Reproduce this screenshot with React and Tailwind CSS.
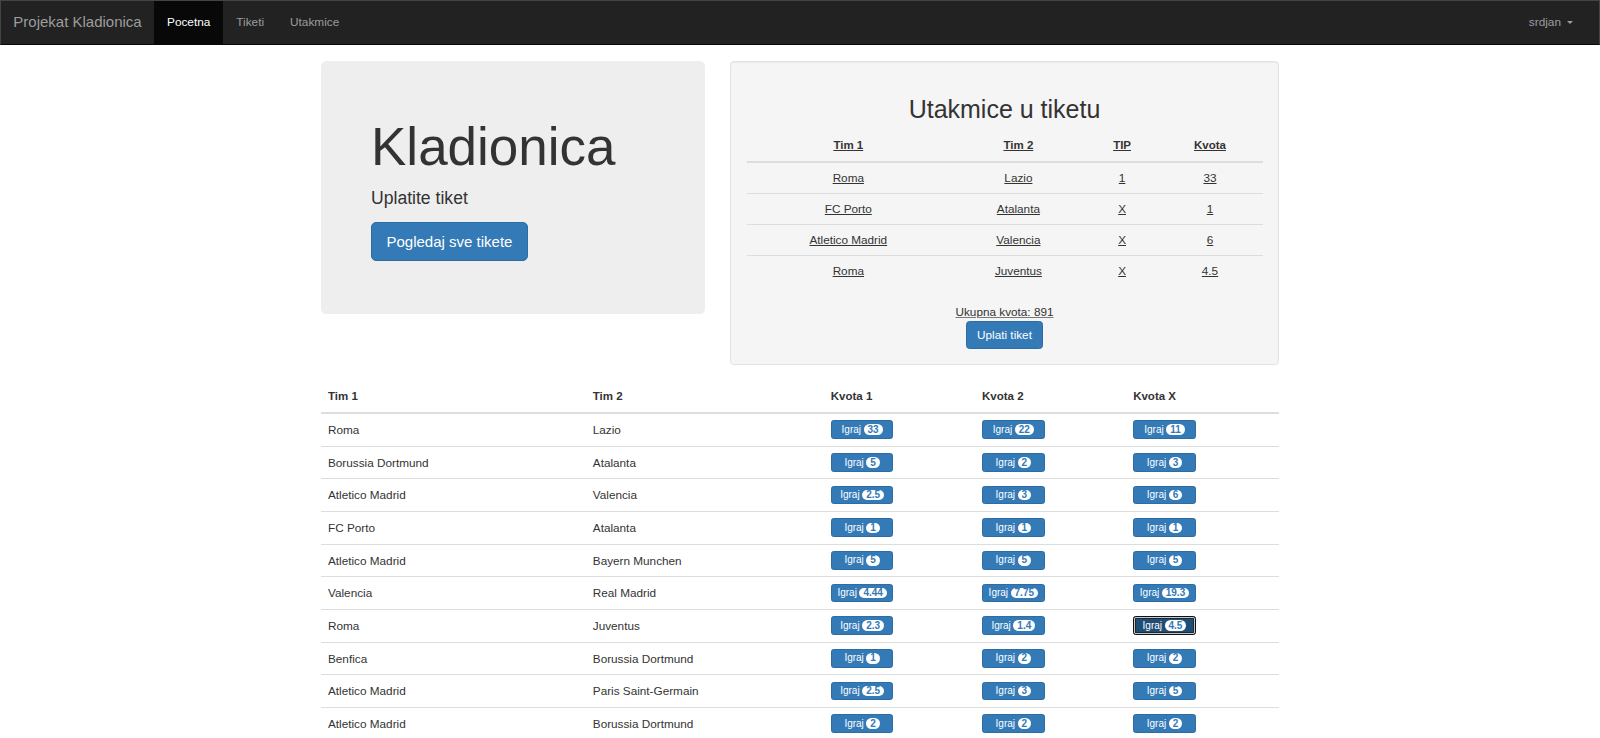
import React from "react";

const ticket = [
  ["Roma", "Lazio", "1", "33"],
  ["FC Porto", "Atalanta", "X", "1"],
  ["Atletico Madrid", "Valencia", "X", "6"],
  ["Roma", "Juventus", "X", "4.5"],
];

const matches = [
  ["Roma", "Lazio", "33", "22", "11"],
  ["Borussia Dortmund", "Atalanta", "5", "2", "3"],
  ["Atletico Madrid", "Valencia", "2.5", "3", "6"],
  ["FC Porto", "Atalanta", "1", "1", "1"],
  ["Atletico Madrid", "Bayern Munchen", "5", "5", "5"],
  ["Valencia", "Real Madrid", "4.44", "7.75", "19.3"],
  ["Roma", "Juventus", "2.3", "1.4", "4.5"],
  ["Benfica", "Borussia Dortmund", "1", "2", "2"],
  ["Atletico Madrid", "Paris Saint-Germain", "2.5", "3", "5"],
  ["Atletico Madrid", "Borussia Dortmund", "2", "2", "2"],
];

function BetButton({ value, active }) {
  return (
    <button
      className={
        active
          ? "w-[62.7px] h-[18.7px] rounded-[2.6px] bg-[#204d74] border border-[#111] shadow-[inset_0_0_0_1px_#c8c8c8,inset_0_0_0_2px_#1a2a3a] text-white text-[10px] leading-none flex items-center justify-center gap-[2.5px]"
          : "w-[62.7px] h-[18.7px] rounded-[2.6px] bg-[#337ab7] border border-[#2e6da4] text-white text-[10px] leading-none flex items-center justify-center gap-[2.5px]"
      }
    >
      <span>Igraj</span>
      <span className="inline-flex items-center h-[10.5px] px-[4px] rounded-full bg-white text-[#337ab7] text-[10px] font-bold leading-none">
        {value}
      </span>
    </button>
  );
}

const tcols = "grid grid-cols-[203.6px_136.6px_70.8px_1fr]";

export default function App() {
  return (
    <div className="h-[738px] overflow-hidden bg-white font-['Liberation_Sans',Arial,sans-serif] text-[#333]">
      {/* Navbar */}
      <div className="h-[45px] bg-[#222] border border-[#444] border-b-[#080808] flex items-stretch justify-between">
        <div className="flex items-stretch">
          <div className="flex items-center px-[12.3px] text-[15px] text-[#9d9d9d]">
            Projekat Kladionica
          </div>
          <div className="flex items-center px-[13px] bg-[#080808] text-white text-[11.8px]">
            Pocetna
          </div>
          <div className="flex items-center px-[13px] text-[#9d9d9d] text-[11.8px]">
            Tiketi
          </div>
          <div className="flex items-center px-[13px] text-[#9d9d9d] text-[11.8px]">
            Utakmice
          </div>
        </div>
        <div className="flex items-center pr-[26px] text-[#9d9d9d] text-[11.8px]">
          <span>srdjan</span>
          <span className="ml-[6px] w-0 h-0 border-l-[3.5px] border-r-[3.5px] border-t-[3.5px] border-l-transparent border-r-transparent border-t-[#9d9d9d]" />
        </div>
      </div>

      {/* Content */}
      <div className="w-[958px] mx-auto">
        <div className="mt-[16px] flex items-start gap-[25px]">
          {/* Jumbotron */}
          <div className="w-[384px] shrink-0 bg-[#eee] rounded-[5.3px] pl-[50px] pt-[56.3px] pb-[53.3px]">
            <h1 className="text-[53px] leading-[59.4px] font-normal">Kladionica</h1>
            <p className="mt-[9.5px] text-[17.6px] leading-[25.7px]">Uplatite tiket</p>
            <button className="mt-[10.4px] h-[38.3px] px-[14.5px] rounded-[5px] bg-[#337ab7] border border-[#2e6da4] text-white text-[15px] leading-none flex items-center">
              Pogledaj sve tikete
            </button>
          </div>

          {/* Well */}
          <div className="w-[549px] shrink-0 bg-[#f5f5f5] border border-[#e3e3e3] rounded-[3.5px] shadow-[inset_0_1px_1px_rgba(0,0,0,0.05)] px-[15.5px] pt-[33px] pb-[14.5px]">
            <h2 className="text-[25px] leading-[28px] text-center font-normal">Utakmice u tiketu</h2>
            <div className="mt-[8px] text-[11.75px]">
              <div className={tcols + " h-[32px] border-b-2 border-[#ddd] items-center font-bold text-[11.5px]"}>
                {["Tim 1", "Tim 2", "TIP", "Kvota"].map((h) => (
                  <div key={h} className="text-center underline">{h}</div>
                ))}
              </div>
              {ticket.map((r, i) => (
                <div
                  key={i}
                  className={
                    i === 0
                      ? tcols + " h-[30.3px] items-center"
                      : tcols + " h-[31px] border-t border-[#ddd] items-center"
                  }
                >
                  {r.map((c, j) => (
                    <div key={j} className="text-center underline">{c}</div>
                  ))}
                </div>
              ))}
            </div>
            <div className="mt-[17.4px] h-[16px] leading-[16px] text-center text-[11.75px] underline decoration-[#777]">
              Ukupna kvota: 891
            </div>
            <div className="mt-[1.5px] flex justify-center">
              <button className="h-[28px] w-[76.3px] rounded-[3.5px] bg-[#337ab7] border border-[#2e6da4] text-white text-[11.75px] leading-none flex items-center justify-center">
                Uplati tiket
              </button>
            </div>
          </div>
        </div>

        {/* Matches table */}
        <div className="mt-[16px]">
          <div className="grid grid-cols-[264.8px_238px_151.2px_151.2px_1fr] h-[33px] border-b-2 border-[#ddd] items-center font-bold text-[11.5px]">
            {["Tim 1", "Tim 2", "Kvota 1", "Kvota 2", "Kvota X"].map((h) => (
              <div key={h} className="pl-[7px]">{h}</div>
            ))}
          </div>
          {matches.map((m, i) => (
            <div
              key={i}
              className={
                i === 0
                  ? "grid grid-cols-[264.8px_238px_151.2px_151.2px_1fr] h-[32px] items-center text-[11.75px]"
                  : "grid grid-cols-[264.8px_238px_151.2px_151.2px_1fr] h-[32.65px] border-t border-[#ddd] items-center text-[11.75px]"
              }
            >
              <div className="pl-[7px]">{m[0]}</div>
              <div className="pl-[7px]">{m[1]}</div>
              <div className="pl-[7px]"><BetButton value={m[2]} /></div>
              <div className="pl-[7px]"><BetButton value={m[3]} /></div>
              <div className="pl-[7px]"><BetButton value={m[4]} active={i === 6} /></div>
            </div>
          ))}
        </div>
      </div>
    </div>
  );
}
